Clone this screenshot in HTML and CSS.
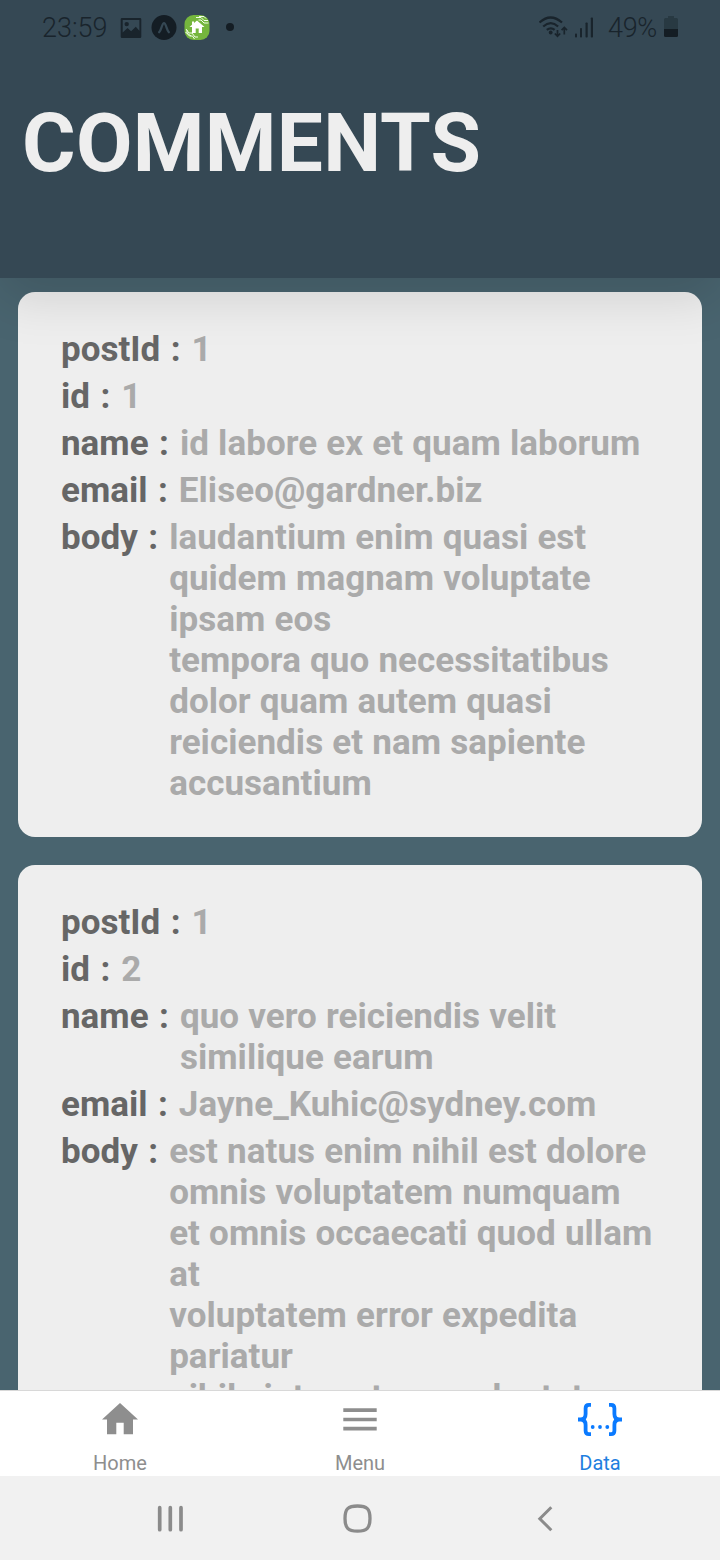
FILE: index.html
```html
<!DOCTYPE html>
<html lang="en">
<head>
<meta charset="utf-8">
<title>Comments</title>
<link rel="stylesheet" href="styles.css">
</head>
<body>
<div class="app">
  <header class="header">
    <div class="status">
      <div class="status-left">
        <span class="clock">23:59</span>
        <svg class="ic-picture" width="22" height="22" viewBox="0 0 22 22"><path fill-rule="evenodd" fill="#19242c" d="M2 1h18q1.300 0 1.300 1.300v17.400q0 1.300-1.300 1.300H2q-1.300 0-1.300-1.300V2.300Q.7 1 2 1zM2.700 3v12.600l4.800-4.700 3.600 3.400 4.700-4.500 3.600 3.900V3zM6.700 4.900a2.200 2.200 0 1 1 0 4.400 2.200 2.200 0 0 1 0-4.400z"/></svg>
        <svg class="ic-expo" width="26" height="26" viewBox="0 0 26 26"><circle cx="13" cy="12.500" r="12.500" fill="#141d24"/><path d="M8.200 17.200C10.200 15.500 11 8.200 13 8.200s2.800 7.300 4.800 9" fill="none" stroke="#354854" stroke-width="2.300" stroke-linecap="round"/></svg>
        <svg class="ic-house" width="26" height="26" viewBox="0 0 26 26"><rect x=".5" y="0" width="25" height="25" rx="9" fill="#75b63d"/><path d="M13 5.500l7.500 6.500h-2.500v6h-3.300v-4.500h-3V18H8v-6H5.500L8 9.800V6.500h2v1.600z" fill="#fff"/><path d="M12 2.500h5l3 3h4M14.500 5h2.500l3 3h4.500M15 1.500h5l2 2M2 14l3 4h3l3 4h3M1.500 17l4 4h3l2 3M3 15v3l4 3" fill="none" stroke="#f1ffe7" stroke-width="1"/></svg>
        <span class="dot"></span>
      </div>
      <div class="status-right">
        <svg width="58" height="28" viewBox="0 0 58 28"><g fill="none" stroke="#19242c" stroke-width="2.200"><path d="M.5 8.500Q11.500-1.500 23 8.500M4.200 12.500q7.600-6.600 14.900 0M7.800 15.900q4-3.200 7.800 0"/><path stroke-width="1.700" d="M18.500 16v6M15.800 19.500l2.700 2.700 2.700-2.700M25.300 20.500v-7M22.600 16.200l2.700-2.700 2.700 2.700"/></g><circle cx="11.700" cy="18.500" r="1.900" fill="#19242c"/><g fill="#19242c"><rect x="36" y="19.500" width="2" height="4" rx=".8"/><rect x="41" y="14" width="2" height="9.500" rx=".8"/><rect x="46.500" y="8.500" width="2.200" height="15" rx=".8"/><rect x="51.800" y="3.500" width="2.200" height="20" rx=".8"/></g></svg>
        <span class="percent">49%</span>
        <svg class="ic-battery" width="16" height="24" viewBox="0 0 16 24"><path d="M5 0h6v2h2.500q1.500 0 1.500 1.500V14H1V3.500Q1 2 2.500 2H5z" fill="#283942"/><path d="M1 13h14v6.500q0 1.500-1.500 1.500h-11Q1 21 1 19.500z" fill="#141d24"/></svg>
      </div>
    </div>
    <h1 class="title">COMMENTS</h1>
  </header>

  <main class="list">
    <article class="card">
      <div class="row"><span class="key">postId :</span><span class="value">1</span></div>
      <div class="row"><span class="key">id :</span><span class="value">1</span></div>
      <div class="row"><span class="key">name :</span><span class="value">id labore ex et quam laborum</span></div>
      <div class="row"><span class="key">email :</span><span class="value">Eliseo@gardner.biz</span></div>
      <div class="row"><span class="key">body :</span><span class="value">laudantium enim quasi est<br>quidem magnam voluptate<br>ipsam eos<br>tempora quo necessitatibus<br>dolor quam autem quasi<br>reiciendis et nam sapiente<br>accusantium</span></div>
    </article>
    <article class="card">
      <div class="row"><span class="key">postId :</span><span class="value">1</span></div>
      <div class="row"><span class="key">id :</span><span class="value">2</span></div>
      <div class="row"><span class="key">name :</span><span class="value">quo vero reiciendis velit<br>similique earum</span></div>
      <div class="row"><span class="key">email :</span><span class="value">Jayne_Kuhic@sydney.com</span></div>
      <div class="row"><span class="key">body :</span><span class="value">est natus enim nihil est dolore<br>omnis voluptatem numquam<br>et omnis occaecati quod ullam<br>at<br>voluptatem error expedita<br>pariatur<br>nihil sint nostrum voluptatem</span></div>
    </article>
  </main>

  <nav class="tabs">
    <div class="tab">
      <svg width="50" height="50" viewBox="0 0 50 50"><path d="M25 7L43 23.500h-5V38.200h-9.300V26.700h-7.400V38.200H12V23.500H7z" fill="#8e8e8e"/></svg>
      <span>Home</span>
    </div>
    <div class="tab">
      <svg width="50" height="50" viewBox="0 0 50 50"><path d="M8.300 12.300h33.400V16H8.300zM8.300 21.700h33.400v3.600H8.300zM8.300 30.800h33.400v3.700H8.300z" fill="#8e8e8e"/></svg>
      <span>Menu</span>
    </div>
    <div class="tab active">
      <svg width="50" height="50" viewBox="0 0 50 50"><g fill="none" stroke="#0a7aff" stroke-width="3.800"><path d="M16 8.900H14Q10.600 8.900 10.600 12.300V18Q10.600 23.500 5.500 23.500H3M5.500 23.500Q10.600 23.500 10.600 29V34.700Q10.600 38.100 14 38.100H16"/><path d="M34 8.900H36Q39.400 8.900 39.400 12.300V18Q39.400 23.500 44.500 23.500H47M44.500 23.500Q39.400 23.500 39.400 29V34.700Q39.400 38.100 36 38.100H34"/></g><g fill="#0a7aff"><circle cx="17.700" cy="31" r="1.900"/><circle cx="25" cy="31" r="1.900"/><circle cx="32.300" cy="31" r="1.900"/></g></svg>
      <span>Data</span>
    </div>
  </nav>

  <footer class="system">
    <svg width="30" height="30" viewBox="0 0 30 30"><path d="M4.700 4.700v22M15.300 4.700v22M26 4.700v22" stroke="#8b8b8b" stroke-width="3.700" stroke-linecap="round"/></svg>
    <svg width="30" height="30" viewBox="0 0 30 30"><path d="M15.500 3C25 3 28 5.900 28 15.400S25 28.100 15.500 28.100 3 24.900 3 15.400 6 3 15.500 3z" fill="none" stroke="#8b8b8b" stroke-width="3.300"/></svg>
    <svg width="30" height="30" viewBox="0 0 30 30"><path d="M22.300 4.200L10.800 15.700 22.300 27.200" fill="none" stroke="#8b8b8b" stroke-width="3"/></svg>
  </footer>
</div>
</body>
</html>
```
FILE: styles.css
```css
* { box-sizing: border-box; }
body { margin: 0; font-family: Roboto, "Liberation Sans", sans-serif; }
svg { display: block; flex: none; }
.app { width: 720px; height: 1560px; display: flex; flex-direction: column; overflow: hidden; background: #49646f; }
.header { position: relative; z-index: 1; flex: none; height: 278px; background: #354854; box-shadow: 0 18px 50px rgba(0, 0, 0, .13); }
.status { height: 56px; display: flex; justify-content: space-between; padding: 0 41px 0 42px; color: #19242c; font-size: 27px; line-height: 56px; }
.status-left, .status-right { display: flex; align-items: center; }
.clock { width: 66px; font-weight: 300; white-space: nowrap; }
.ic-picture { margin-left: 12px; }
.ic-expo { margin-left: 9px; }
.ic-house { margin-left: 7px; }
.dot { width: 8px; height: 8px; margin: -2px 0 0 16px; border-radius: 50%; background: #141d24; }
.percent { width: 49px; margin-left: 11px; font-weight: 300; letter-spacing: -.3px; white-space: nowrap; }
.ic-battery { margin-left: 6px; }
.title { margin: 39px 0 0 22px; font-size: 82px; line-height: 96px; font-weight: 700; letter-spacing: .25px; color: #eee; }
.list { flex: 1; min-height: 0; overflow: hidden; padding: 14px 18px 0; display: flex; flex-direction: column; gap: 28px; }
.card { flex: none; padding: 37px 40px 27px 43px; border-radius: 17px; background: #eee; }
.row { display: flex; gap: 11px; margin-bottom: 6px; font-size: 35px; line-height: 41px; font-weight: 700; white-space: nowrap; }
.key { color: #666; word-spacing: 1.8px; }
.value { color: #aaa; letter-spacing: .04px; word-spacing: .4px; }
.tabs { position: relative; z-index: 1; flex: none; height: 86px; display: flex; background: #fff; border-top: 1px solid #d8d8d8; }
.tab { flex: 1; display: flex; flex-direction: column; align-items: center; padding-top: 5px; color: #8e8e8e; font-size: 20px; line-height: 24px; }
.tab span { margin-top: 5px; }
.active { color: #1f7fe0; }
.system { flex: none; height: 84px; display: flex; align-items: center; gap: 157px; padding-left: 155px; background: #f1f1f1; }
```
